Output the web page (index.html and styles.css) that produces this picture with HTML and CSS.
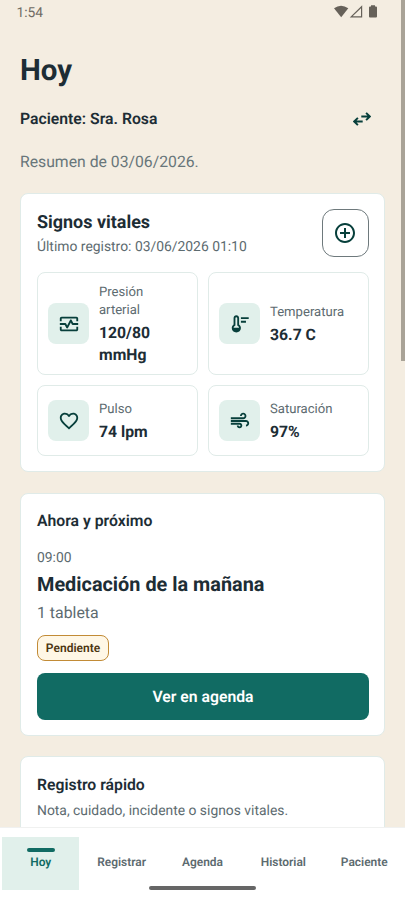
FILE: index.html
```
<!DOCTYPE html>
<html lang="es">
<head>
<meta charset="utf-8">
<title>Hoy</title>
<link rel="stylesheet" href="styles.css">
</head>
<body>
<div class="screen">
  <header class="status">
    <span>1:54</span>
    <svg class="status-icons" viewBox="0 0 44 14"><path d="M0 3.200Q7 -1.800 14.300 3.200L7.200 12.300Z" fill="#666159"/><path d="M17.200 11.900H27.600V1.700Z" fill="none" stroke="#666159" stroke-width="1.200"/><path d="M37 .3h4v1.200h1q1 0 1 1v9q0 1-1 1h-6q-1 0-1-1v-9q0-1 1-1h1z" fill="#666159"/></svg>
  </header>
  <main class="content">
    <h1>Hoy</h1>
    <div class="patient">
      <span>Paciente: Sra. Rosa</span>
      <svg class="swap" viewBox="0 0 18 14"><path d="M8.300 4.500H16.600M13.100.8L16.800 4.500L13.100 8.200M9.700 9.500H1.400M4.900 5.800L1.200 9.500L4.900 13.200"/></svg>
    </div>
    <p class="summary">Resumen de 03/06/2026.</p>

    <section class="card vitals">
      <div class="vitals-head">
        <div>
          <h2>Signos vitales</h2>
          <p class="note">Último registro: 03/06/2026 01:10</p>
        </div>
        <button class="add" aria-label="Añadir"><svg viewBox="0 0 24 24"><path d="M13 7h-2v4H7v2h4v4h2v-4h4v-2h-4V7zm-1-5C6.480 2 2 6.480 2 12s4.480 10 10 10 10-4.480 10-10S17.520 2 12 2zm0 18c-4.410 0-8-3.590-8-8s3.590-8 8-8 8 3.590 8 8-3.590 8-8 8z"/></svg></button>
      </div>
      <div class="grid">
        <div class="metric">
          <span class="tile"><svg viewBox="0 0 24 24"><path d="M20 4H4c-1.100 0-2 .9-2 2v3h2V6h16v3h2V6c0-1.100-.9-2-2-2zM20 18H4v-3H2v3c0 1.100.9 2 2 2h16c1.100 0 2-.9 2-2v-3h-2v3z"/><path d="M14.890 7.550c-.34-.68-1.450-.68-1.790 0L10 13.760l-1.110-2.210A.99.99 0 0 0 8 11H2v2h5.380l1.720 3.450c.18.34.52.55.9.55s.72-.21.89-.55L14 10.240l1.110 2.210c.17.34.51.55.89.55h6v-2h-5.380l-1.730-3.450z"/></svg></span>
          <div><p class="label">Presión<br>arterial</p><p class="value">120/80<br>mmHg</p></div>
        </div>
        <div class="metric">
          <span class="tile"><svg viewBox="0 0 24 24"><path fill-rule="evenodd" d="M5 12.500V5.500C5 3.800 6.300 2.500 8 2.500S11 3.800 11 5.500v7c1.200.9 2 2.300 2 3.900 0 2.700-2.200 4.800-5 4.800s-5-2.100-5-4.800c0-1.600.8-3 2-3.900zm0 3.500h6c-.1-.8-.5-1.400-1.200-1.900L9 13.500V5.500c0-.6-.4-1-1-1s-1 .4-1 1v8l-.8.600c-.7.5-1.100 1.100-1.200 1.900zM13 4.500h8.500v2H13zM13 8.500h5.500v2H13z"/></svg></span>
          <div><p class="label">Temperatura</p><p class="value">36.7 C</p></div>
        </div>
        <div class="metric">
          <span class="tile"><svg viewBox="0 0 24 24"><path d="M16.500 3c-1.740 0-3.410.81-4.500 2.090C10.910 3.810 9.240 3 7.500 3 4.420 3 2 5.420 2 8.500c0 3.780 3.400 6.860 8.550 11.540L12 21.350l1.450-1.320C18.600 15.360 22 12.280 22 8.500 22 5.420 19.580 3 16.500 3zm-4.400 15.550l-.1.1-.1-.1C7.140 14.240 4 11.390 4 8.500 4 6.500 5.500 5 7.500 5c1.540 0 3.040.99 3.570 2.360h1.870C13.460 5.990 14.960 5 16.500 5c2 0 3.500 1.500 3.500 3.500 0 2.890-3.140 5.740-7.900 10.050z"/></svg></span>
          <div><p class="label">Pulso</p><p class="value">74 lpm</p></div>
        </div>
        <div class="metric">
          <span class="tile"><svg viewBox="0 0 24 24"><path d="M14.500 17c0 1.650-1.350 3-3 3s-3-1.350-3-3h2c0 .55.45 1 1 1s1-.45 1-1-.45-1-1-1H2v-2h9.500c1.650 0 3 1.350 3 3zM19 6.500C19 4.570 17.430 3 15.500 3S12 4.570 12 6.500h2c0-.83.67-1.500 1.500-1.500s1.500.67 1.500 1.500S16.330 8 15.500 8H2v2h13.500c1.930 0 3.500-1.570 3.500-3.500zm-.5 4.500H2v2h16.500c.83 0 1.500.67 1.500 1.500s-.67 1.500-1.500 1.500v2c1.930 0 3.500-1.570 3.500-3.500S20.430 11 18.500 11z"/></svg></span>
          <div><p class="label">Saturación</p><p class="value">97%</p></div>
        </div>
      </div>
    </section>

    <section class="card next">
      <h3>Ahora y próximo</h3>
      <p class="note time">09:00</p>
      <p class="event">Medicación de la mañana</p>
      <p class="dose">1 tableta</p>
      <span class="badge">Pendiente</span>
      <button class="primary">Ver en agenda</button>
    </section>

    <section class="card quick">
      <h3>Registro rápido</h3>
      <p class="note">Nota, cuidado, incidente o signos vitales.</p>
    </section>
  </main>
  <nav class="tabs">
    <a class="tab active">Hoy</a>
    <a class="tab">Registrar</a>
    <a class="tab">Agenda</a>
    <a class="tab">Historial</a>
    <a class="tab">Paciente</a>
    <span class="home-bar"></span>
  </nav>
  <span class="scrollbar"></span>
</div>
</body>
</html>
```
FILE: styles.css
```
* { box-sizing: border-box; margin: 0; padding: 0; }
body { font-family: Roboto, sans-serif; color: #1d2d35; text-rendering: geometricPrecision; }
button { font: inherit; text-rendering: inherit; }
svg { display: block; flex: none; }
.screen {
  position: relative;
  width: 405px;
  height: 900px;
  display: flex;
  flex-direction: column;
  overflow: hidden;
  background: #f4ede1;
}
.status {
  flex: none;
  height: 24px;
  display: flex;
  justify-content: space-between;
  align-items: center;
  padding: 0 27.500px 0 16.500px;
  font-size: 13.800px;
  color: #706b63;
}
.status span { padding-top: 1px; }
.status-icons { width: 44px; height: 14px; }
.content { flex: 1; min-height: 0; overflow: hidden; padding: 27px 20px 0; }
h1 { font-size: 29.500px; line-height: 40px; font-weight: 700; }
.patient {
  height: 47px;
  margin-top: 4px;
  display: flex;
  align-items: center;
  justify-content: space-between;
  padding-right: 14px;
  font-size: 15.750px;
  font-weight: 600;
}
.swap { width: 18px; height: 14px; fill: none; stroke: #073f3b; stroke-width: 1.900; }
.summary { margin-top: 8px; font-size: 15.750px; line-height: 24px; color: #68767a; }
.card {
  background: #fff;
  border: 1px solid #e0ebe8;
  border-radius: 8px;
  padding: 16px 15px 16px 16px;
}
.vitals { margin-top: 19px; height: 279px; padding-top: 15px; }
.vitals-head { display: flex; justify-content: space-between; height: 48px; }
h2 { font-size: 17.950px; line-height: 25px; font-weight: 700; margin-top: 1px; }
.note { font-size: 13.880px; line-height: 20px; color: #5d6b70; }
.vitals-head .note { margin-top: 2px; }
.add {
  width: 47.500px;
  height: 47.500px;
  background: #fff;
  border: 1px solid #6e797c;
  border-radius: 12px;
  display: flex;
  align-items: center;
  justify-content: center;
}
.add svg { width: 24px; height: 24px; fill: #073f3b; }
.grid {
  margin-top: 15px;
  display: grid;
  grid-template-columns: 1fr 1fr;
  grid-template-rows: 103px 71px;
  gap: 10px;
}
.metric {
  display: flex;
  align-items: center;
  gap: 10px;
  padding: 0 10px;
  border: 1px solid #e0ebe8;
  border-radius: 8px;
}
.metric div { padding-top: 2px; }
.tile {
  flex: none;
  width: 41px;
  height: 41px;
  border-radius: 8px;
  background: #e1f0eb;
  display: flex;
  align-items: center;
  justify-content: center;
}
.tile svg { width: 22px; height: 22px; fill: #073f3b; }
.label { font-size: 13.100px; line-height: 18px; color: #5d6b70; }
.value { font-size: 15.750px; line-height: 22px; font-weight: 700; margin-top: 2px; }
.next { margin-top: 21px; height: 243px; }
h3 { font-size: 15.750px; line-height: 22px; font-weight: 600; }
.time { margin-top: 16px; }
.event { margin-top: 3px; font-size: 19.870px; line-height: 28px; font-weight: 700; }
.dose { margin-top: 2px; font-size: 15.850px; line-height: 24px; color: #5d6b70; }
.badge {
  display: flex;
  width: 72px;
  height: 26px;
  margin-top: 10px;
  align-items: center;
  justify-content: center;
  border: 1px solid #c28b36;
  border-radius: 8px;
  background: #fff7e6;
  color: #4c3510;
  font-size: 12px;
  font-weight: 600;
}
.primary {
  display: block;
  width: 100%;
  height: 47px;
  margin-top: 12px;
  border: 0;
  border-radius: 8px;
  background: #116b63;
  color: #fff;
  font-size: 15.750px;
  font-weight: 600;
}
.quick { margin-top: 20px; height: 180px; padding-top: 17px; }
.quick .note { margin-top: 5px; }
.tabs {
  position: relative;
  flex: none;
  height: 73px;
  display: flex;
  gap: 4px;
  padding: 8.500px 2.300px 10px;
  background: #fff;
  border-top: 1px solid #f0f1f0;
}
.tab {
  flex: 1;
  display: flex;
  flex-direction: column;
  align-items: center;
  font-size: 11.950px;
  line-height: 16px;
  font-weight: 600;
  color: #5d6b70;
}
.tab::before { content: ""; width: 28px; height: 4px; margin: 11.500px 0 2px; border-radius: 2px; }
.active { background: #e1f0eb; color: #116b63; }
.active::before { background: #116b63; }
.home-bar {
  position: absolute;
  left: 149px;
  top: 58px;
  width: 107px;
  height: 4px;
  border-radius: 2px;
  background: #666;
}
.scrollbar { position: absolute; right: 0; top: 0; width: 4.500px; height: 361px; background: #a9a397; }
```
